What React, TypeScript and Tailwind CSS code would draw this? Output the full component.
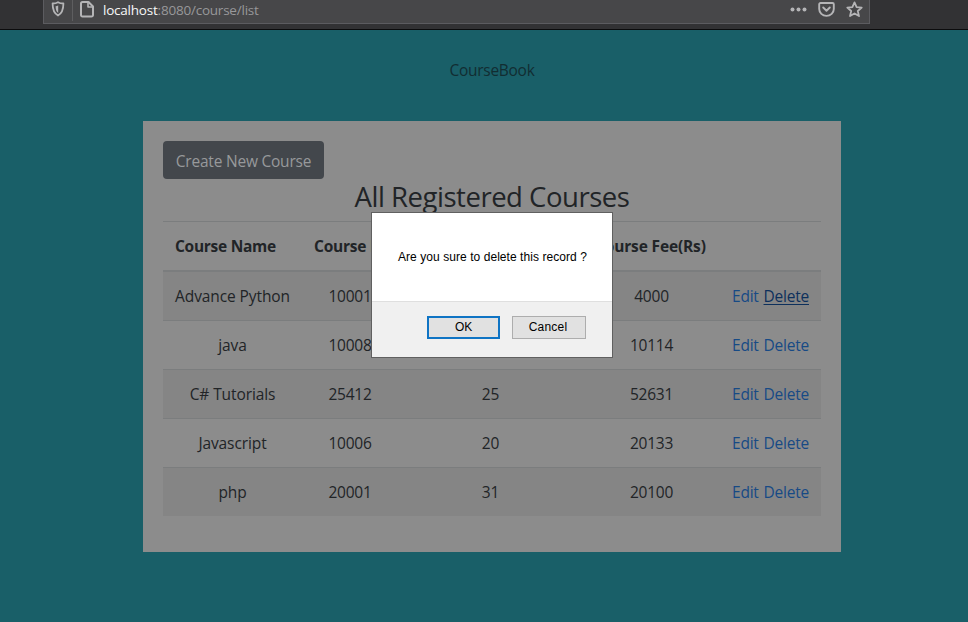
import React from "react";

type Course = { name: string; id: string; duration: string; fee: string };

const courses: Course[] = [
  { name: "Advance Python", id: "10001", duration: "30", fee: "4000" },
  { name: "java", id: "10008", duration: "30", fee: "10114" },
  { name: "C# Tutorials", id: "25412", duration: "25", fee: "52631" },
  { name: "Javascript", id: "10006", duration: "20", fee: "20133" },
  { name: "php", id: "20001", duration: "31", fee: "20100" },
];

const columns = "grid grid-cols-[139px_96px_185px_137px_101px] items-center pt-[2px]";

function AddressBar() {
  return (
    <header className="h-[30px] border-b border-[#0c0c0d] bg-[#323234] pl-[43px]">
      <div className="flex h-6 w-[827px] border-x border-b border-[#5c5c60] bg-[#474749] text-[#b5b5b7]">
        <div className="flex h-[21px] w-[29px] items-center justify-center border-r border-[#5e5e60]">
          <svg className="mb-[3px]" width="14" height="16" viewBox="0 0 14 16" fill="none" stroke="currentColor" strokeWidth="1.8">
            <path d="M7 1.2C5.2 2.3 3.4 2.5 1.6 2.5c0 6 .9 9.6 5.4 12 4.5-2.4 5.4-6 5.4-12C10.600 2.500 8.800 2.300 7 1.200Z" strokeLinejoin="round" />
            <path d="M7.200 4.600v7.300C5.100 10.400 4.700 8.200 4.600 5.200c.9 0 1.700-.2 2.600-.6Z" fill="currentColor" stroke="none" />
          </svg>
        </div>
        <svg className="ml-[6px] mt-px" width="16" height="17" viewBox="0 0 16 17" fill="none" stroke="currentColor" strokeWidth="2" strokeLinejoin="round">
          <path d="M3.500 1h6L14 5.500V14a1.500 1.500 0 0 1-1.500 1.500h-9A1.500 1.500 0 0 1 2 14V2.500A1.500 1.500 0 0 1 3.500 1Z" />
          <path d="M9 1v5h5" strokeWidth="1.600" />
        </svg>
        <div className="ml-[8px] flex h-5 items-center font-['Open_Sans','Noto_Sans',sans-serif] text-[13.5px] tracking-[-0.22px] text-[#98989a]">
          <span className="text-[#f7f7f8]">localhost</span>:8080/course/list
        </div>
        <div className="ml-auto flex h-[19px] items-center pr-[6px]">
          <svg width="17" height="5" viewBox="0 0 17 5" fill="currentColor">
            <circle cx="2.500" cy="2.500" r="2" />
            <circle cx="8.500" cy="2.500" r="2" />
            <circle cx="14.500" cy="2.500" r="2" />
          </svg>
          <svg className="ml-[11px]" width="17" height="15" viewBox="0 0 17 15" fill="none" stroke="currentColor" strokeWidth="1.900" strokeLinecap="round" strokeLinejoin="round">
            <path d="M2.500 1h12A1.300 1.300 0 0 1 15.800 2.300V7a7.300 6.900 0 0 1-14.600 0V2.300A1.300 1.300 0 0 1 2.500 1Z" />
            <path d="m5.200 5.500 3.300 3.200 3.300-3.200" />
          </svg>
          <svg className="ml-[11px]" width="17" height="17" viewBox="0 0 17 17" fill="none" stroke="currentColor" strokeWidth="1.800" strokeLinejoin="round">
            <path d="m8.500 1.400 2.100 4.700 5.100.5-3.900 3.400 1.200 5.100-4.500-2.700-4.500 2.700 1.200-5.100-3.900-3.400 5.100-.5Z" />
          </svg>
        </div>
      </div>
    </header>
  );
}

function CourseTable() {
  return (
    <div>
      <div className={`${columns} h-[49px] border-t border-[#7b7d7e] font-bold`}>
        <span className="pl-3 tracking-[-0.28px]">Course Name</span>
        <span className="pl-3 whitespace-nowrap">Course ID</span>
        <span className="pl-3 whitespace-nowrap">Course Duration</span>
        <span className="pl-3 whitespace-nowrap tracking-[-0.15px]">Course Fee(Rs)</span>
      </div>
      {courses.map((course, index) => (
        <div
          key={course.id}
          className={`${columns} border-[#7b7d7e] text-center ${index === 0 ? "h-[50px] border-t-2" : "h-[49px] border-t"} ${index % 2 === 0 ? "bg-[#858585]" : ""}`}
        >
          <span className="tracking-[-0.1px]">{course.name}</span>
          <span>{course.id}</span>
          <span>{course.duration}</span>
          <span>{course.fee}</span>
          <span className="flex justify-between pl-3 pr-3 text-[#174a85]">
            <a>Edit</a>
            <a className={index === 0 ? "text-[#0d305c] underline underline-offset-2" : ""}>Delete</a>
          </span>
        </div>
      ))}
    </div>
  );
}

function ConfirmDialog() {
  return (
    <div
      role="dialog"
      className="absolute left-[371px] top-[212px] flex h-[146px] w-[242px] flex-col border border-[#606060] bg-white font-['Liberation_Sans',Arial,sans-serif] text-[12px] text-black"
    >
      <p className="h-[88px] pl-[26px] pt-[35px] leading-[18px] tracking-[0.06px] whitespace-nowrap">Are you sure to delete this record ?</p>
      <div className="flex flex-1 items-start gap-3 border-t border-[#dfdfdf] bg-[#f0f0f0] pl-[55px] pt-[14px]">
        <button className="h-[23px] w-[73px] border-2 border-[#0f74c4] bg-[#e1e1e1] pb-[1px] leading-[18px]">OK</button>
        <button className="h-[23px] w-[74px] border border-[#adadad] bg-[#e1e1e1] pb-[1px] pr-[2px] leading-[20px] tracking-[0.2px]">Cancel</button>
      </div>
    </div>
  );
}

export default function App() {
  return (
    <div className="relative h-[622px] w-[968px] overflow-hidden bg-[#195f68] font-['Open_Sans','Noto_Sans',sans-serif] text-[15.5px] tracking-[-0.22px] text-[#212427]">
      <AddressBar />
      <main className="flex flex-col items-center pl-4">
        <div className="flex h-[91px] items-center pb-[9px] tracking-[-0.28px] text-[#122d32]">CourseBook</div>
        <section className="h-[431px] w-[698px] bg-[#8c8c8c] px-5 pt-5">
          <button className="h-[38px] w-[161px] rounded bg-[#43474c] pt-[4px] text-[#97999b]">Create New Course</button>
          <h1 className="h-[42px] text-center text-[27.5px] leading-[36px] tracking-[-0.48px]">All Registered Courses</h1>
          <CourseTable />
        </section>
      </main>
      <ConfirmDialog />
    </div>
  );
}
